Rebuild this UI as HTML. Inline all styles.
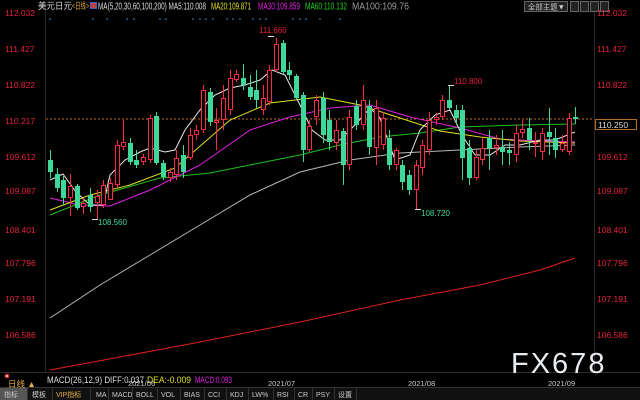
<!DOCTYPE html>
<html><head><meta charset="utf-8"><style>
html,body{margin:0;padding:0;background:#000;width:640px;height:400px;overflow:hidden}
svg text{font-family:"Liberation Sans","Noto Sans CJK SC",sans-serif}
</style></head><body>
<svg width="640" height="400" viewBox="0 0 640 400" xmlns="http://www.w3.org/2000/svg">
<rect width="640" height="400" fill="#000"/>
<line x1="45.5" y1="8" x2="45.5" y2="372" stroke="#2a2a2a"/>
<line x1="594.5" y1="8" x2="594.5" y2="372" stroke="#2a2a2a"/>
<line x1="0" y1="372.5" x2="640" y2="372.5" stroke="#2a2a2a"/>
<line x1="0" y1="387.5" x2="640" y2="387.5" stroke="#333"/>
<text x="38" y="9" font-size="9" fill="#ddd" textLength="34" lengthAdjust="spacingAndGlyphs">美元日元</text>
<text x="72" y="9" font-size="9" fill="#e8b040" textLength="17" lengthAdjust="spacingAndGlyphs">&lt;日线&gt;</text>
<rect x="90" y="2" width="7" height="7" fill="#4060c0"/><rect x="91" y="3" width="5" height="5" fill="#c04040"/>
<text x="98" y="9.5" font-size="10" fill="#ddd" textLength="108" lengthAdjust="spacingAndGlyphs">MA(5,20,30,60,100,200) MA5:110.008</text>
<text x="211" y="9.5" font-size="10" fill="#e0e020" textLength="40" lengthAdjust="spacingAndGlyphs">MA20:109.871</text>
<text x="258" y="9.5" font-size="10" fill="#e020e0" textLength="42" lengthAdjust="spacingAndGlyphs">MA30:109.859</text>
<text x="305" y="9.5" font-size="10" fill="#20d020" textLength="42" lengthAdjust="spacingAndGlyphs">MA60:110.132</text>
<text x="352" y="9.5" font-size="10" fill="#999" textLength="57" lengthAdjust="spacingAndGlyphs">MA100:109.76</text>
<rect x="524.5" y="1.5" width="43" height="10" fill="#222" stroke="#666"/>
<text x="528" y="9.5" font-size="7.5" fill="#ccc" textLength="37" lengthAdjust="spacingAndGlyphs">全部主题▼</text>
<rect x="570.5" y="1.5" width="8" height="10" fill="#222" stroke="#666"/>
<rect x="580.5" y="1.5" width="8" height="10" fill="#222" stroke="#666"/>
<rect x="590.5" y="1.5" width="8" height="10" fill="#222" stroke="#666"/>
<rect x="600.5" y="1.5" width="8" height="10" fill="#222" stroke="#666"/>
<g fill="#3a9adf">
<circle cx="50" cy="19" r="0.8"/><circle cx="93" cy="19" r="0.8"/><circle cx="107" cy="19" r="0.8"/><circle cx="127" cy="19" r="0.8"/><circle cx="134" cy="19" r="0.8"/><circle cx="160" cy="19" r="0.8"/><circle cx="166" cy="19" r="0.8"/><circle cx="193" cy="19" r="0.8"/><circle cx="200" cy="19" r="0.8"/><circle cx="206" cy="19" r="0.8"/><circle cx="213" cy="19" r="0.8"/><circle cx="227" cy="19" r="0.8"/><circle cx="233" cy="19" r="0.8"/><circle cx="240" cy="19" r="0.8"/><circle cx="253" cy="19" r="0.8"/><circle cx="260" cy="19" r="0.8"/><circle cx="266" cy="19" r="0.8"/><circle cx="293" cy="19" r="0.8"/><circle cx="300" cy="19" r="0.8"/><circle cx="306" cy="19" r="0.8"/><circle cx="320" cy="19" r="0.8"/><circle cx="340" cy="19" r="0.8"/>
</g>
<g font-size="8.5" fill="#e8203a">
<text x="5" y="16">112.032</text><text x="597" y="16">112.032</text>
<text x="5" y="52">111.427</text><text x="597" y="52">111.427</text>
<text x="5" y="88">110.822</text><text x="597" y="88">110.822</text>
<text x="5" y="124">110.217</text>
<text x="5" y="160">109.612</text><text x="597" y="160">109.612</text>
<text x="5" y="194">109.087</text><text x="597" y="194">109.087</text>
<text x="5" y="233">108.401</text><text x="597" y="233">108.401</text>
<text x="5" y="266">107.796</text><text x="597" y="266">107.796</text>
<text x="5" y="302">107.191</text><text x="597" y="302">107.191</text>
<text x="5" y="338">106.586</text><text x="597" y="338">106.586</text>
</g>
<line x1="46" y1="119" x2="594" y2="119" stroke="#c07020" stroke-dasharray="2,2"/>
<rect x="595.5" y="119.5" width="41" height="10" fill="#000" stroke="#b07020"/>
<text x="598" y="128" font-size="8.5" fill="#ddd">110.250</text>
<g fill="none" stroke-width="1">
<polyline stroke="#b8b8b8" points="50,318 100,285 150,255 200,225 250,195 300,172 350,160 400,153 460,150 520,147 575,145"/>
<polyline stroke="#e02020" points="50,370 120,357 200,342 300,322 400,300 480,285 540,270 575,258"/>
<polyline stroke="#20c020" points="50,215 100,195 160,178 210,173 260,163 300,155 340,145 380,137 420,133 460,127 520,125 575,124"/>
<polyline stroke="#e020e0" points="50,198 80,205 110,206 150,190 200,165 250,130 290,117 330,108 370,105 410,117 460,128 500,139 540,141 575,142"/>
<polyline stroke="#e0e020" points="50,210 90,195 130,185 175,168 230,120 270,103 320,97 360,105 400,118 440,131 480,137 520,141 575,143"/>
<polyline stroke="#e8e8e8" points="50,180 63,174 76,192 90,205 103,205 110,175 125,160 140,152 150,148 165,152 175,150 185,130 200,110 215,95 230,88 245,85 260,80 272,70 285,75 300,105 312,130 325,140 340,140 355,125 370,108 380,118 395,160 410,155 420,130 435,115 450,110 462,135 475,155 490,155 505,145 520,145 540,140 555,140 575,132"/>
</g>
<g id="c"></g>
<text x="259" y="33" font-size="8" fill="#e8203a">111.660</text>
<line x1="268" y1="36.5" x2="274" y2="36.5" stroke="#ddd"/>
<text x="454" y="84" font-size="8" fill="#e8203a">110.800</text>
<line x1="448" y1="85.5" x2="454" y2="85.5" stroke="#ddd"/>
<text x="98" y="225" font-size="8" fill="#3ed89a">108.560</text>
<line x1="92" y1="219.5" x2="98" y2="219.5" stroke="#ddd"/>
<text x="421" y="216" font-size="8" fill="#3ed89a">108.720</text>
<line x1="415" y1="209.5" x2="421" y2="209.5" stroke="#ddd"/>
<text x="511" y="373" font-size="29" fill="#e8ecf0" letter-spacing="2">FX678</text>
<circle cx="7" cy="376" r="2.5" fill="#d02020"/><circle cx="7" cy="376" r="1" fill="#fff"/>
<text x="47" y="383" font-size="9" fill="#ddd" textLength="97" lengthAdjust="spacingAndGlyphs">MACD(26,12,9) DIFF:0.037</text>
<text x="147" y="383" font-size="9" fill="#e0e020" textLength="44" lengthAdjust="spacingAndGlyphs">DEA:-0.009</text>
<text x="195" y="383" font-size="9" fill="#e020e0" textLength="37" lengthAdjust="spacingAndGlyphs">MACD:0.093</text>
<text x="8" y="387" font-size="8.5" fill="#e8b040">日线 ▲</text>
<g font-size="7.5" fill="#ccc">
<text x="128" y="386">2021/06</text><text x="268" y="386">2021/07</text><text x="408" y="386">2021/08</text><text x="548" y="386">2021/09</text>
</g>
<rect x="0" y="388" width="640" height="12" fill="#111"/>
<rect x="0" y="388" width="27" height="12" fill="#555"/>
<g font-size="7" fill="#ccc">
<text x="4" y="397">指标</text><text x="32" y="397">模板</text><text x="56" y="397" fill="#e8b040">VIP指标</text>
<text x="96" y="397">MA</text><text x="112" y="397">MACD</text><text x="136" y="397">BOLL</text><text x="161" y="397">VOL</text><text x="184" y="397">BIAS</text><text x="208" y="397">CCI</text><text x="230" y="397">KDJ</text><text x="252" y="397">LW%</text><text x="277" y="397">RSI</text><text x="298" y="397">CR</text><text x="316" y="397">PSY</text><text x="338" y="397">设置</text>
</g>
<g stroke="#333"><line x1="27.5" y1="388" x2="27.5" y2="400"/><line x1="52.5" y1="388" x2="52.5" y2="400"/><line x1="90.5" y1="388" x2="90.5" y2="400"/><line x1="108.5" y1="388" x2="108.5" y2="400"/><line x1="132.5" y1="388" x2="132.5" y2="400"/><line x1="157.5" y1="388" x2="157.5" y2="400"/><line x1="180.5" y1="388" x2="180.5" y2="400"/><line x1="204.5" y1="388" x2="204.5" y2="400"/><line x1="226.5" y1="388" x2="226.5" y2="400"/><line x1="248.5" y1="388" x2="248.5" y2="400"/><line x1="273.5" y1="388" x2="273.5" y2="400"/><line x1="294.5" y1="388" x2="294.5" y2="400"/><line x1="312.5" y1="388" x2="312.5" y2="400"/><line x1="334.5" y1="388" x2="334.5" y2="400"/><line x1="356.5" y1="388" x2="356.5" y2="400"/></g>
</svg>
<script>
var d=[
['g',160,172,150,178],['g',174,188,168,192],['g',180,198,176,205],['r',186,198,174,216],['g',186,208,184,210],['r',203,207,198,214],['g',195,207,188,212],['r',196,203,190,219],['r',185,205,180,208],['r',183,200,178,200],
['r',145,185,140,188],['r',142,147,120,150],['g',143,162,138,165],['g',160,165,150,168],['r',157,162,154,165],['r',118,160,115,163],['g',116,163,112,165],['g',163,177,160,180],['r',172,178,168,182],['r',158,175,150,180],
['g',155,172,145,178],['r',135,158,128,160],['r',130,135,125,140],['r',90,130,85,133],['g',92,122,88,126],['r',120,123,108,150],['r',98,120,85,130],['r',78,110,70,115],['r',74,80,70,82],['g',78,85,64,90],
['g',87,97,75,100],['g',90,100,70,108],['r',98,110,85,115],['r',70,102,65,105],['r',44,70,38,72],['g',43,72,40,74],['g',70,75,62,80],['g',76,98,74,100],['g',95,150,92,162],['r',126,150,120,152],
['r',100,117,95,125],['g',98,135,92,143],['g',120,142,110,150],['r',130,143,120,150],['g',131,165,128,185],['r',117,165,110,170],['g',106,125,100,130],['r',100,125,85,130],['g',106,147,100,155],['r',108,148,100,165],
['r',118,145,112,150],['g',138,165,130,170],['r',150,165,148,170],['g',165,182,160,190],['g',175,190,170,195],['r',165,190,160,210],['r',145,168,140,175],['r',120,150,112,155],['r',117,120,113,125],['r',100,117,95,120],
['g',100,108,85,110],['g',110,118,105,125],['g',110,158,105,180],['g',148,178,140,185],['r',157,178,150,180],['r',148,160,138,165],['g',138,148,130,170],['r',145,148,135,155],['g',147,152,130,165],['g',150,153,142,165],
['r',133,155,125,162],['r',129,133,120,138],['g',128,140,118,150],['r',142,143,132,157],['r',133,152,128,160],['g',132,137,108,155],['g',138,150,128,158],['r',143,150,135,152],['r',118,152,113,155],['g',117,119,107,124]];
var s='';
for(var i=0;i<d.length;i++){var c=d[i],x=Math.round(50+i*6.65),col=c[0]=='g'?'#3ed89a':'#ff2a44';
s+='<line x1="'+(x+0.5)+'" y1="'+c[3]+'" x2="'+(x+0.5)+'" y2="'+c[4]+'" stroke="'+col+'"/>';
if(c[0]=='g')s+='<rect x="'+(x-2)+'" y="'+c[1]+'" width="5" height="'+Math.max(1,c[2]-c[1])+'" fill="'+col+'"/>';
else s+='<rect x="'+(x-1.5)+'" y="'+(c[1]+0.5)+'" width="4" height="'+Math.max(1,c[2]-c[1]-1)+'" fill="#000" stroke="'+col+'"/>';}
document.getElementById('c').innerHTML=s;
</script>
</body></html>
